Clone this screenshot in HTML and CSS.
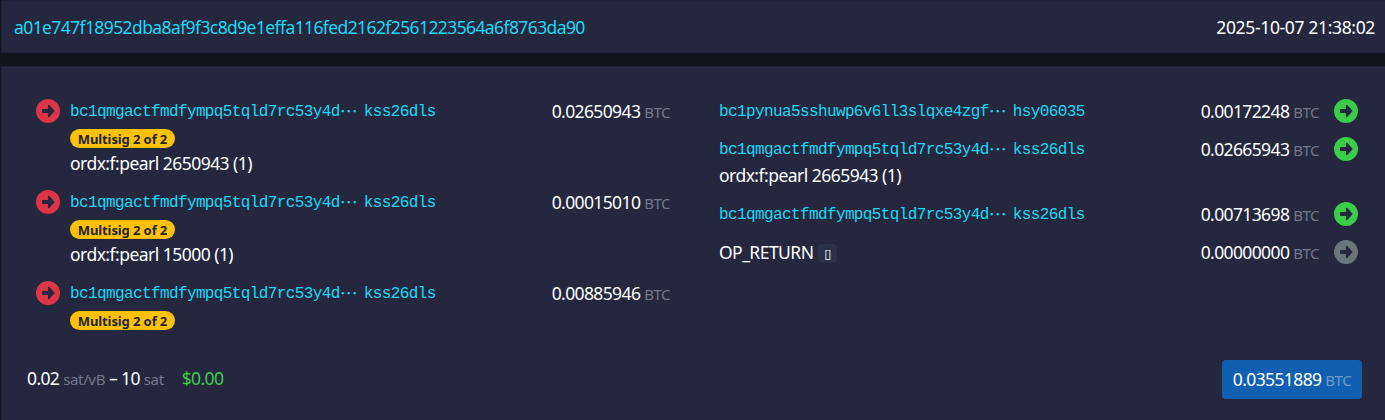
FILE: index.html
```
<!DOCTYPE html>
<html lang="en">
<head>
<meta charset="utf-8">
<title>Transaction</title>
<link rel="stylesheet" href="styles.css">
</head>
<body>
<svg width="0" height="0" class="defs"><symbol id="arrow" viewBox="0 0 24 24"><path fill-rule="evenodd" fill="currentColor" d="M12 0a12 12 0 1 1 0 24a12 12 0 0 1 0-24ZM6.8 9.9a.8.8 0 0 0-.8.8v2.6c0 .4.4.8.8.8h5.1v3.3c0 .8.9 1 1.4.5l5-5.3a.8.8 0 0 0 0-1.2l-5-5.3c-.5-.5-1.4-.3-1.4.5v3.3Z"/></symbol></svg>
<header class="head"><a class="txid">a01e747f18952dba8af9f3c8d9e1effa116fed2162f2561223564a6f8763da90</a><time class="time">2025-10-07 21:38:02</time></header>
<main class="panel">
<div class="columns">
<section class="inputs">
<div class="row tall"><svg class="icon red"><use href="#arrow"/></svg><div class="detail"><a class="address">bc1qmgactfmdfympq5tqld7rc53y4d<span class="dots">⋯</span><span>kss26dls</span></a><span class="badge">Multisig 2 of 2</span><span class="asset a1">ordx:f:pearl 2650943 (1)</span></div><div class="amount">0.02650943 <span class="unit">BTC</span></div></div>
<div class="row tall"><svg class="icon red"><use href="#arrow"/></svg><div class="detail"><a class="address">bc1qmgactfmdfympq5tqld7rc53y4d<span class="dots">⋯</span><span>kss26dls</span></a><span class="badge">Multisig 2 of 2</span><span class="asset a1">ordx:f:pearl 15000 (1)</span></div><div class="amount">0.00015010 <span class="unit">BTC</span></div></div>
<div class="row"><svg class="icon red"><use href="#arrow"/></svg><div class="detail"><a class="address">bc1qmgactfmdfympq5tqld7rc53y4d<span class="dots">⋯</span><span>kss26dls</span></a><span class="badge">Multisig 2 of 2</span></div><div class="amount">0.00885946 <span class="unit">BTC</span></div></div>
</section>
<section class="outputs">
<div class="row short"><div class="detail"><a class="address">bc1pynua5sshuwp6v6ll3slqxe4zgf<span class="dots">⋯</span><span>hsy06035</span></a></div><div class="amount">0.00172248 <span class="unit">BTC</span></div><svg class="icon green"><use href="#arrow"/></svg></div>
<div class="row medium"><div class="detail"><a class="address">bc1qmgactfmdfympq5tqld7rc53y4d<span class="dots">⋯</span><span>kss26dls</span></a><span class="asset">ordx:f:pearl 2665943 (1)</span></div><div class="amount">0.02665943 <span class="unit">BTC</span></div><svg class="icon green"><use href="#arrow"/></svg></div>
<div class="row short"><div class="detail"><a class="address">bc1qmgactfmdfympq5tqld7rc53y4d<span class="dots">⋯</span><span>kss26dls</span></a></div><div class="amount">0.00713698 <span class="unit">BTC</span></div><svg class="icon green"><use href="#arrow"/></svg></div>
<div class="row short"><div class="detail op"><span class="opname">OP_RETURN</span><span class="chip">▯</span></div><div class="amount">0.00000000 <span class="unit">BTC</span></div><svg class="icon gray"><use href="#arrow"/></svg></div>
</section>
</div>
<footer class="foot"><div class="fees"><span class="rate">0.02 <span class="unit">sat/vB</span> – 10 <span class="unit">sat</span></span><span class="fiat">$0.00</span></div><div class="total">0.03551889 <span class="unit">BTC</span></div></footer>
</main>
</body>
</html>
```
FILE: styles.css
```
* { box-sizing: border-box; }
body { margin: 0; height: 420px; overflow: hidden; display: flex; flex-direction: column; gap: 13px; padding-left: 1px; background: #11131f; color: #fff; font: 17.5px/26px "Noto Sans", "Open Sans", sans-serif; letter-spacing: -0.62px; white-space: nowrap; }
.defs { display: none; }
.head { height: 53px; flex: none; display: flex; justify-content: space-between; align-items: center; padding: 0 10px 0 12px; background: #24273e; border: 1px solid #1f2237; border-right: 0; }
.txid, .address { color: #1bd8f4; }
.txid { letter-spacing: -0.6px; }
.time { letter-spacing: -0.35px; }
.panel { flex: 1; background: #24273e; border: 1px solid #1f2237; border-width: 1px 0 0 1px; padding: 31px 23px 0 34px; }
.columns { display: grid; grid-template-columns: 634px 1fr; column-gap: 49px; height: 262px; padding-right: 4px; }
.row { display: flex; align-items: flex-start; }
.tall { height: 91px; }
.short { height: 38px; }
.medium { height: 65px; }
.icon { width: 24px; height: 24px; flex: none; margin-top: 1px; }
.red { color: #dc3545; margin-right: 10px; }
.green { color: #3bcc49; margin-left: 15px; }
.gray { color: #6c757d; margin-left: 15px; }
.detail { display: flex; flex-direction: column; align-items: flex-start; flex: 1; }
.address { display: flex; height: 26px; font: 16px/29px "Liberation Mono", monospace; letter-spacing: -0.61px; }
.dots { width: 24px; font: 18px/25px "Noto Sans CJK SC", sans-serif; letter-spacing: 0; }
.badge { width: 105px; height: 19px; margin-top: 5px; border-radius: 10px; background: #ffc107; color: #212529; font-size: 13px; font-weight: 700; line-height: 20px; text-align: center; letter-spacing: -0.1px; }
.asset { letter-spacing: -0.53px; }
.a1 { margin-top: 2px; }
.amount { line-height: 26px; }
.unit { color: #74778a; font-size: 15px; letter-spacing: -0.5px; }
.op { flex-direction: row; justify-content: flex-start; gap: 5px; }
.opname { letter-spacing: -0.55px; }
.chip { width: 19px; height: 19px; margin-top: 5px; border-radius: 4px; background: #2b3147; font: bold 13px/19px "DejaVu Sans", sans-serif; text-align: center; letter-spacing: 0; }
.foot { display: flex; justify-content: space-between; height: 39px; margin-left: -10px; }
.fees { display: flex; gap: 18px; line-height: 37px; letter-spacing: -0.62px; padding-left: 1px; }
.fees .unit { letter-spacing: -0.35px; }
.fiat { color: #3bcc49; }
.total { width: 140px; height: 39px; border-radius: 4px; background: #105fb0; text-align: center; line-height: 39px; }
.total .unit { color: #6b9bcc; }
```
